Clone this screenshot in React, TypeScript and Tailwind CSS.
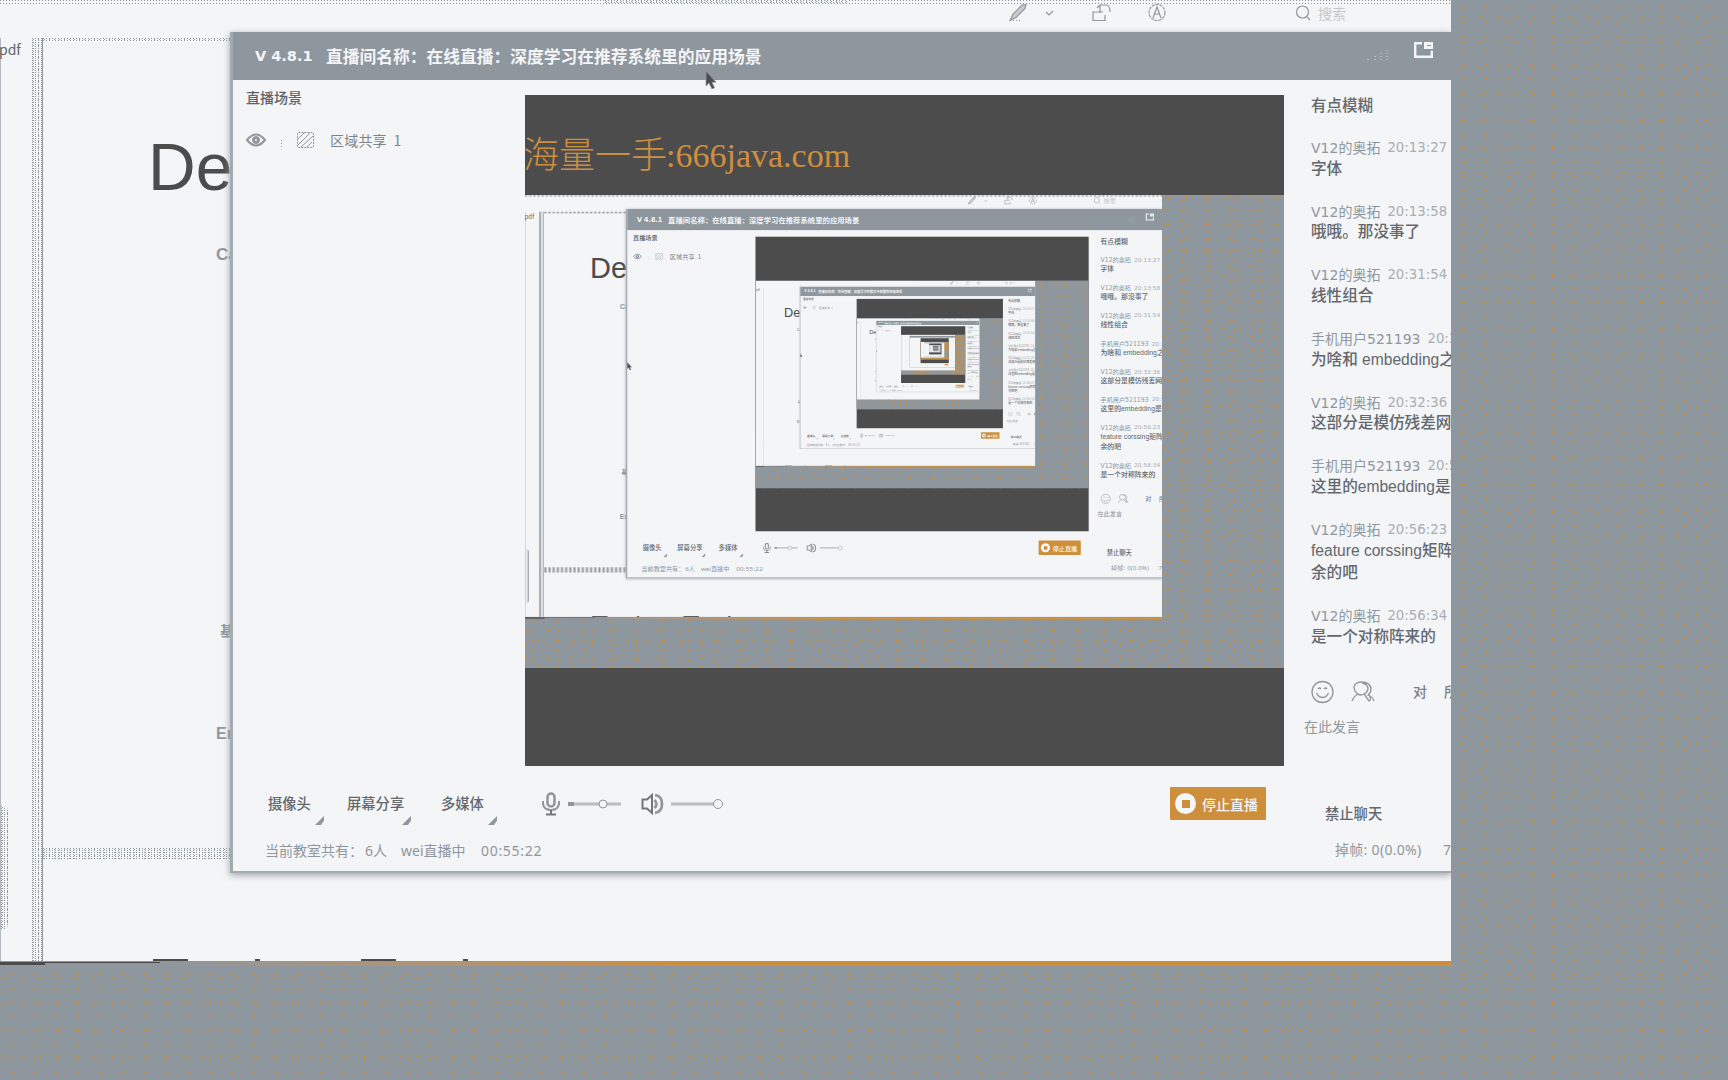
import React from 'react';

type Message = { name: string; time: string; lines: string[] };

const messages: Message[] = [
  { name: 'V12的奥拓', time: '20:13:27', lines: ['字体'] },
  { name: 'V12的奥拓', time: '20:13:58', lines: ['哦哦。那没事了'] },
  { name: 'V12的奥拓', time: '20:31:54', lines: ['线性组合'] },
  { name: '手机用户521193', time: '20:31', lines: ['为啥和 embedding之'] },
  { name: 'V12的奥拓', time: '20:32:36', lines: ['这部分是模仿残差网'] },
  { name: '手机用户521193', time: '20:5', lines: ['这里的embedding是'] },
  { name: 'V12的奥拓', time: '20:56:23', lines: ['feature corssing矩阵', '余的吧'] },
  { name: 'V12的奥拓', time: '20:56:34', lines: ['是一个对称阵来的'] },
];

const speckle =
  'bg-[#8f979e] bg-[radial-gradient(circle_at_1.5px_1.5px,#ce8f3d_0.6px,transparent_0.7px),radial-gradient(circle_at_4.5px_3.5px,#ce8f3d_0.6px,transparent_0.7px),radial-gradient(circle_at_7.5px_5.5px,#ce8f3d_0.6px,transparent_0.7px)] bg-[size:11px_7px,9px_13px,13px_10px]';
const wideSpeckle =
  'bg-[#8f979e] bg-[radial-gradient(circle_at_3.5px_3.5px,#ce8f3d_1.3px,transparent_1.5px),radial-gradient(circle_at_10.5px_7.5px,#ce8f3d_1.3px,transparent_1.5px),radial-gradient(circle_at_17.5px_12.5px,#ce8f3d_1.3px,transparent_1.5px)] bg-[size:25px_16px,20px_29px,30px_23px]';
const grain =
  'bg-[#f4f5f7] bg-[radial-gradient(circle_at_0.5px_0.5px,#8f979e_0.6px,transparent_0.7px),radial-gradient(circle_at_1.5px_1.5px,#8f979e_0.6px,transparent_0.7px)] bg-[size:3px_2px,5px_3px]';

// The mirrored copies below this level are too small to carry any lettering.
const LAST_LETTERED_LEVEL = 3;

function Cursor({ className }: { className: string }) {
  return (
    <svg className={`absolute z-20 h-[19px] w-[13px] ${className}`} viewBox="0 0 13 19">
      <path d="M2 1v15l3-3 3 6 2.500-1.200-2.600-5.600H12z" fill="#4c4c4c" stroke="#8f979e" strokeWidth="0.8" />
    </svg>
  );
}

function ViewerToolbar({ lettered }: { lettered: boolean }) {
  return (
    <div className="relative h-[38px] w-full">
      <div className="h-[4px] w-full bg-[radial-gradient(circle_at_0.5px_0.5px,#8f979e_0.6px,transparent_0.7px)] bg-[size:3px_3px]" />
      <div className={`absolute left-[605px] top-0 h-[3px] w-[243px] ${grain}`} />
      <svg className="absolute left-[1008px] top-0 h-[24px] w-[344px]" viewBox="0 0 344 24" fill="none" stroke="#8f979e" strokeWidth="1.2">
        <path d="M2 20.500L5 14 14 5l4-.5-1 4-9 9z" fill="#8f979e" fillOpacity="0.45" />
        <path d="M2 20.500h12" strokeDasharray="1 2" />
        <path d="M38 12l3 3 4-4" />
        <path d="M88 12h-3v8.500h12V15M88 12h7M92 13V5M89 8l3-3h6q4 0 4 7" />
        <circle cx="149" cy="12.500" r="8" strokeDasharray="3 1" />
        <path d="M145 18l4-11 4 11M146.500 14h5" />
        <circle cx="294.500" cy="12" r="6" />
        <path d="M299 17l3 3" />
      </svg>
      {lettered && <span className="absolute left-[1318px] top-[6px] text-[14px] leading-none text-[#c3c8cc]">搜索</span>}
    </div>
  );
}

function TitleBar({ lettered }: { lettered: boolean }) {
  return (
    <div className="relative flex h-[48px] shrink-0 items-center bg-[#8f979e] pl-[22px] text-[16.750px] font-bold leading-none text-[#f4f5f7]">
      {lettered && (
        <>
          <span className="w-[71px] pt-[1px] font-['DejaVu_Sans','Noto_Sans_CJK_SC',sans-serif] text-[14.500px]">V 4.8.1</span>
          <span className="whitespace-nowrap">直播间名称：在线直播：深度学习在推荐系统里的应用场景</span>
        </>
      )}
      <svg className="absolute left-[1133px] top-[8px] h-[24px] w-[68px]" viewBox="0 0 68 24" fill="none" stroke="#f4f5f7">
        <path d="M2 20v-3M9 20v-5M15 20v-8M21 20v-10" strokeDasharray="1 2" strokeOpacity="0.8" />
        <path d="M56 3.200h-6.800v13.600h16.600v-6" strokeWidth="2.400" />
        <path d="M58 2h9v7h-9z" fill="#f4f5f7" stroke="none" />
        <path d="M61 5.500h4" stroke="#8f979e" />
      </svg>
    </div>
  );
}

function ScenePanel({ lettered }: { lettered: boolean }) {
  return (
    <div className="w-[292px] shrink-0 pl-[13px] pt-[10px] leading-none">
      <div className="h-[14px] text-[14px] font-medium text-[#5f6468]">{lettered && '直播场景'}</div>
      <div className="mt-[27px] flex h-[18px] items-center text-[14px] text-[#7d858b]">
        <svg className="h-[16px] w-[84px]" viewBox="0 0 84 16" fill="none" stroke="#8f979e">
          <path d="M1 8q9-11 18 0-9 11-18 0z" strokeWidth="2" />
          <circle cx="10" cy="8" r="3.500" fill="#8f979e" />
          <circle cx="10" cy="8" r="1" fill="#f4f5f7" stroke="none" />
          <path d="M35.500 8v8" strokeDasharray="1 2" />
          <rect x="51.500" y="0.500" width="16" height="15" rx="1" strokeDasharray="2 1" />
          <path d="M52 7l7-7M52 13L64 1M55 15L67 4M61 15l5-5" />
        </svg>
        {lettered && <span className="whitespace-pre tracking-[0.200px]">区域共享  1</span>}
      </div>
    </div>
  );
}

function Slider({ value }: { value: 'middle' | 'end' }) {
  return (
    <svg className="h-[12px] w-[56px]" viewBox="0 0 56 12" fill="none" stroke="#8f979e">
      {value === 'middle' ? (
        <>
          <path d="M0 6h53" strokeWidth="3" strokeOpacity="0.6" />
          <path d="M0 6h6" strokeWidth="4" />
          <circle cx="35" cy="6" r="4" fill="#f4f5f7" />
        </>
      ) : (
        <>
          <path d="M0 6h45" strokeWidth="3" strokeOpacity="0.6" />
          <circle cx="47" cy="6" r="4.500" fill="#f4f5f7" />
        </>
      )}
    </svg>
  );
}

function MediaButton({ label, className }: { label: string | false; className: string }) {
  return (
    <div className={`relative h-[40px] pt-[7px] ${className}`}>
      {label}
      <svg className="absolute right-0 top-[27px] h-[9px] w-[9px]" viewBox="0 0 9 9">
        <path d="M9 0v4.500L6 9H0z" fill="#8f979e" />
      </svg>
    </div>
  );
}

function Controls({ lettered }: { lettered: boolean }) {
  return (
    <div className="flex h-[60px] shrink-0 pl-[35px] pt-[15px] text-[14.300px] font-medium leading-none text-[#62686d]">
      <MediaButton label={lettered && '摄像头'} className="w-[56px]" />
      <MediaButton label={lettered && '屏幕分享'} className="ml-[23px] w-[64px]" />
      <MediaButton label={lettered && '多媒体'} className="ml-[30px] w-[56px]" />
      <div className="ml-[44px] flex h-[30px] items-center">
        <svg className="h-[24px] w-[20px]" viewBox="0 0 20 24" fill="none" stroke="#8f979e">
          <rect x="6.500" y="1.500" width="7" height="13" rx="3.500" strokeWidth="2.500" />
          <path d="M2 9v3q1 6 8 6t8-6V9" strokeWidth="2" />
          <path d="M10 18v5M5 22.500h10" strokeWidth="2" stroke="#70777c" />
        </svg>
        <div className="ml-[7px] flex"><Slider value="middle" /></div>
        <svg className="ml-[17px] h-[22px] w-[23px]" viewBox="0 0 23 22" fill="none" stroke="#8f979e" strokeWidth="2">
          <path d="M1.500 6.500h4.500L11 2v18l-5-4.500H1.500z" stroke="#70777c" />
          <path d="M13.500 7q4 4 0 8M14 2q7 1 7 9t-7 9" strokeWidth="2.700" />
        </svg>
        <div className="ml-[7px] flex"><Slider value="end" /></div>
      </div>
      <div className="ml-auto mr-[18px] mt-[-2px] flex h-[33px] w-[96px] items-center rounded-[1px] bg-[#ce8f3d] pl-[5px] text-[14px] text-[#f4f5f7]">
        <span className="flex h-[21px] w-[21px] items-center justify-center rounded-full bg-[#f4f5f7]">
          <span className="h-[8px] w-[8px] bg-[#ce8f3d]" />
        </span>
        {lettered && <span className="ml-[6px]">停止直播</span>}
      </div>
    </div>
  );
}

function ChatColumn() {
  return (
    <div className="relative flex w-[167px] shrink-0 flex-col overflow-hidden whitespace-nowrap pl-[27px] pt-[15px] font-['Liberation_Sans','Noto_Sans_CJK_SC',sans-serif] leading-none">
      <div className="h-[46px] text-[15.500px] font-medium leading-[22.500px] text-[#62686d]">有点模糊</div>
      <div className="h-[539px]">
        {messages.map((m) => (
          <div key={m.name + m.time} className="pb-[24.700px]">
            <div className="flex gap-[7px] font-['DejaVu_Sans','Noto_Sans_CJK_SC',sans-serif] text-[14px] leading-[14px] text-[#8f979e]">
              <span>{m.name}</span>
              <span className="text-[13.300px] text-[#a8aeb3]">{m.time}</span>
            </div>
            <div className="mt-[2.500px] text-[15.600px] font-medium leading-[22.500px] text-[#62686d]">
              {m.lines.map((l) => (
                <div key={l}>{l}</div>
              ))}
            </div>
          </div>
        ))}
      </div>
      <div className="flex h-[24px] items-center text-[14px] font-medium text-[#7a8187]">
        <svg className="h-[24px] w-[102px] shrink-0" viewBox="0 0 102 24" fill="none" stroke="#8f979e" strokeWidth="1.300">
          <circle cx="11.500" cy="12" r="10.500" />
          <path d="M7 9q1.500-2 3 0M13 9q1.500-2 3 0M5.500 13q2 4.500 6 4.500t6-4.500" />
          <path d="M41 21q2-5 6-7-4-3-4-7 1-5 8-5 8 0 9 7 0 4-3 6 5 2 6 6M51 3q6 1 6 6-1 4-4 5l5 7q3-1 0-6M53 14q-4 2-6 0" />
        </svg>
        <span>对</span>
        <span className="ml-[17px]">所有人</span>
      </div>
      <div className="ml-[-7px] mt-[16px] text-[14px] text-[#8f979e]">在此发言</div>
      <div className="ml-[14px] mt-[73px] text-[14.300px] font-medium text-[#62686d]">禁止聊天</div>
      <div className="ml-[24px] mt-[21px] flex gap-[20px] font-['Noto_Sans','Noto_Sans_CJK_SC',sans-serif] text-[14px] leading-[16px] text-[#8f979e]">
        <span className="w-[89px] tracking-[0.300px]">掉帧: 0(0.0%)</span>
        <span>7</span>
      </div>
    </div>
  );
}

function StatusBar() {
  return (
    <div className="flex pl-[32px] pt-[9px] font-['Noto_Sans','Noto_Sans_CJK_SC',sans-serif] text-[14px] leading-[16px] text-[#8f979e]">
      <span className="w-[100px]">当前教室共有：</span>
      <span className="w-[36px]">6人</span>
      <span className="w-[80px]">wei直播中</span>
      <span className="tracking-[0.700px]">00:55:22</span>
    </div>
  );
}

function LiveWindow({ depth }: { depth: number }) {
  const lettered = depth <= LAST_LETTERED_LEVEL;
  return (
    <div className="absolute left-[230px] top-[32px] flex h-[841px] w-[1221px] flex-col border-b-2 border-l-[3px] border-[#a3aab0] bg-[#f4f5f7] shadow-[0_2px_7px_#9aa1a7]">
      <TitleBar lettered={lettered} />
      <div className="flex min-h-0 flex-1">
        <div className="flex w-[1051px] shrink-0 flex-col">
          <div className="flex h-[694px] shrink-0">
            <ScenePanel lettered={lettered} />
            <div className="mt-[15px] flex h-[671px] w-[759px] shrink-0 flex-col bg-[#4c4c4c] pt-[100px]">
              <div className={`h-[473px] w-[759px] shrink-0 overflow-hidden ${depth === 0 ? speckle : wideSpeckle}`}>
                {depth < 6 && (
                  <div className="h-[1080px] w-[1728px] origin-top-left scale-[0.439]">
                    <Desktop depth={depth + 1} />
                  </div>
                )}
              </div>
            </div>
          </div>
          <Controls lettered={lettered} />
          {lettered && <StatusBar />}
        </div>
        {lettered && <ChatColumn />}
      </div>
    </div>
  );
}

function PageEdge() {
  return (
    <>
      <div className="ml-[105px] mt-[90px] font-['Liberation_Sans',sans-serif] text-[66px] leading-[70px] text-[#4c4c4c]">De</div>
      <div className="ml-[173px] mt-[43px] font-['Liberation_Sans',sans-serif] text-[17px] font-bold leading-[20px]">Ca</div>
      <div className="ml-[177px] mt-[355px] text-[14px] font-bold leading-[20px]">基</div>
      <div className="ml-[173px] mt-[84px] font-['Liberation_Sans',sans-serif] text-[16px] font-bold leading-[20px]">Em</div>
    </>
  );
}

function Desktop({ depth }: { depth: number }) {
  const lettered = depth <= LAST_LETTERED_LEVEL;
  return (
    <div className={`h-[1080px] w-[1728px] overflow-hidden ${depth === 0 ? speckle : ''}`}>
      <div className="relative h-[961px] w-[1451px] overflow-hidden bg-[#f4f5f7]">
        <ViewerToolbar lettered={lettered} />
        <div className="flex h-[923px]">
          <div className="relative w-[32px] shrink-0 border-l border-[#b4babf] pt-[4px] text-[14px] leading-none text-[#5f6468]">
            {lettered && <span className="-ml-[2px]">pdf</span>}
            <div className={`absolute left-0 top-[768px] h-[124px] w-[8px] rounded-r-lg ${grain}`} />
          </div>
          <div className={`w-[11px] shrink-0 border-r border-[#8f979e] ${grain}`} />
          <div className="relative w-[188px] shrink-0 text-[#8f979e]">
            <div className={`h-[4px] ${grain}`} />
            {lettered && <PageEdge />}
            <div className={`absolute left-0 top-[810px] h-[12px] w-full ${grain}`} />
          </div>
        </div>
        <LiveWindow depth={depth} />
        <Cursor className={depth === 0 ? 'left-[704px] top-[70px]' : 'left-[231px] top-[380px]'} />
        <div className="absolute bottom-0 left-0 h-[2px] w-full">
          <div className="flex h-[2px] pl-[153px] text-[#4c4c4c]">
            <span className="w-[35px] bg-current" />
            <span className="ml-[67px] w-[5px] bg-current" />
            <span className="ml-[101px] w-[35px] bg-current" />
            <span className="ml-[67px] w-[5px] bg-current" />
          </div>
        </div>
      </div>
      <div className="flex h-[5px] w-[1451px] pt-[1px]">
        <div className="h-[3px] w-[45px] bg-[#4c4c4c]" />
        <div className="h-[1px] w-[115px] bg-[#4c4c4c]" />
        <div className="h-[4px] flex-1 bg-linear-to-r from-[#8f979e] to-[#ce8f3d] to-40%" />
      </div>
    </div>
  );
}

export default function App() {
  return (
    <div className="relative h-[1080px] w-[1728px] overflow-hidden font-['Noto_Sans_CJK_SC',sans-serif]">
      <Desktop depth={0} />
      <div className="absolute left-[523px] top-[135px] flex items-center whitespace-nowrap font-['Liberation_Serif','Noto_Sans_CJK_SC',serif] leading-[42px] text-[#ce8f3d]">
        <span className="w-[143px] text-[36px] font-light">海量一手</span>
        <span className="text-[34px]">:666java.com</span>
      </div>
    </div>
  );
}
